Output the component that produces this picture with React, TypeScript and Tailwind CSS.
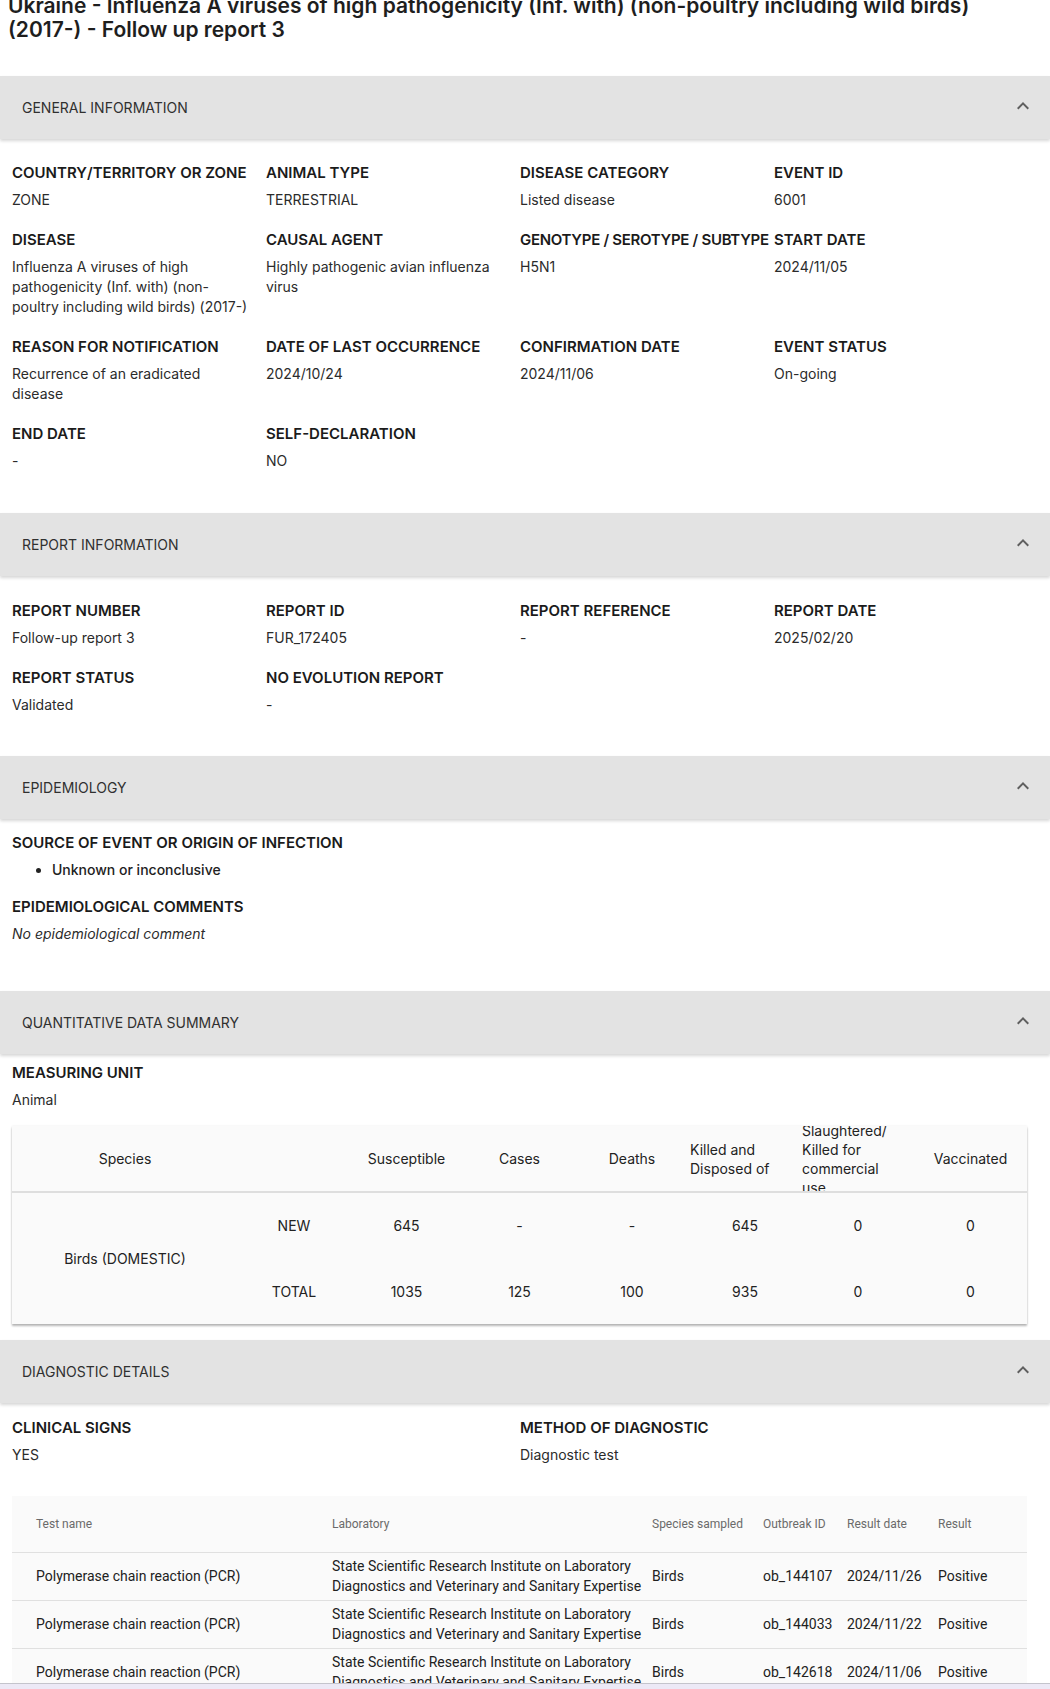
import React from "react";

type Field = { label: string; value: React.ReactNode; tight?: boolean };

const generalFields: Field[] = [
  { label: "Country/Territory or zone", value: "ZONE" },
  { label: "Animal type", value: "TERRESTRIAL" },
  { label: "Disease category", value: "Listed disease" },
  { label: "Event ID", value: "6001" },
  {
    label: "Disease",
    value: (
      <>
        Influenza A viruses of high
        <br />
        pathogenicity (Inf. with) (non-
        <br />
        poultry including wild birds) (2017-)
      </>
    ),
  },
  {
    label: "Causal agent",
    value: (
      <>
        Highly pathogenic avian influenza
        <br />
        virus
      </>
    ),
  },
  // this label runs right up to the next column in the original
  { label: "Genotype / Serotype / Subtype", value: "H5N1", tight: true },
  { label: "Start date", value: "2024/11/05" },
  {
    label: "Reason for notification",
    value: (
      <>
        Recurrence of an eradicated
        <br />
        disease
      </>
    ),
  },
  { label: "Date of last occurrence", value: "2024/10/24" },
  { label: "Confirmation date", value: "2024/11/06" },
  { label: "Event status", value: "On-going" },
  { label: "End date", value: "-" },
  { label: "Self-declaration", value: "NO" },
];

const reportFields: Field[] = [
  { label: "Report number", value: "Follow-up report 3" },
  { label: "Report ID", value: "FUR_172405" },
  { label: "Report reference", value: "-" },
  { label: "Report date", value: "2025/02/20" },
  { label: "Report status", value: "Validated" },
  { label: "No evolution report", value: "-" },
];

const tests = [
  { outbreak: "ob_144107", date: "2024/11/26" },
  { outbreak: "ob_144033", date: "2024/11/22" },
  { outbreak: "ob_142618", date: "2024/11/06" },
];

function ExpandLess() {
  return (
    <svg viewBox="0 0 24 24" className="mb-[3px] h-6 w-6 fill-[#5f5f5f]">
      <path d="M12 8l-6 6 1.41 1.41L12 10.83l4.59 4.58L18 14z" />
    </svg>
  );
}

function SectionHeader({ title }: { title: string }) {
  return (
    <div className="relative z-10 flex h-[63px] items-center justify-between bg-[#e3e3e3] pl-[22px] pr-[15px] shadow-[0_2px_3px_rgba(0,0,0,0.16)]">
      <span className="text-[14px] uppercase text-[#303030]">{title}</span>
      <ExpandLess />
    </div>
  );
}

function FieldBlock({
  label,
  tight,
  children,
}: {
  label: string;
  tight?: boolean;
  children: React.ReactNode;
}) {
  return (
    <div className="pb-5">
      <div
        className={
          tight
            ? "whitespace-nowrap text-[15px] font-semibold uppercase leading-5 tracking-[-0.3px] text-[#1b1b1b]"
            : "whitespace-nowrap text-[15px] font-semibold uppercase leading-5 text-[#1b1b1b]"
        }
      >
        {label}
      </div>
      <div className="mt-[7px] whitespace-nowrap text-[14px] leading-5 text-[#2b2b2b]">{children}</div>
    </div>
  );
}

function QuantHead({ children, wrap }: { children: React.ReactNode; wrap?: boolean }) {
  return (
    <th className="h-[65px] p-0 font-normal">
      <div
        className={
          wrap
            ? "flex h-[65px] items-center overflow-hidden text-left leading-[19px]"
            : "flex h-[65px] items-center justify-center overflow-hidden"
        }
      >
        <span>{children}</span>
      </div>
    </th>
  );
}

export default function App() {
  return (
    <div className="min-h-screen bg-white font-[family-name:Inter,'Noto_Sans',sans-serif] text-[#222]">
      <h1 className="mt-[-6px] mb-[34px] px-2 text-[21px] font-semibold leading-6 text-[#1e1e1e]">
        Ukraine - Influenza A viruses of high pathogenicity (Inf. with) (non-poultry including wild birds)
        <br />
        (2017-) - Follow up report 3
      </h1>

      <SectionHeader title="General information" />
      <div className="grid grid-cols-[254px_254px_254px_254px] px-3 pt-6 pb-[22px]">
        {generalFields.map((f) => (
          <FieldBlock key={f.label} label={f.label} tight={f.tight}>
            {f.value}
          </FieldBlock>
        ))}
      </div>

      <SectionHeader title="Report information" />
      <div className="grid grid-cols-[254px_254px_254px_254px] px-3 pt-[25px] pb-[21px]">
        {reportFields.map((f) => (
          <FieldBlock key={f.label} label={f.label}>
            {f.value}
          </FieldBlock>
        ))}
      </div>

      <SectionHeader title="Epidemiology" />
      <div className="px-3 pt-[14px] pb-[47px]">
        <div className="text-[15px] font-semibold uppercase leading-5 text-[#1b1b1b]">
          Source of event or origin of infection
        </div>
        <ul className="mt-[7px] list-disc pl-[40px] text-[14px] font-medium leading-5 text-[#222]">
          <li>Unknown or inconclusive</li>
        </ul>
        <div className="mt-[17px] text-[15px] font-semibold uppercase leading-5 text-[#1b1b1b]">
          Epidemiological comments
        </div>
        <div className="mt-[7px] text-[14px] italic leading-5 text-[#2b2b2b]">No epidemiological comment</div>
      </div>

      <SectionHeader title="Quantitative data summary" />
      <div className="px-3 pt-[9px] pb-4">
        <div className="text-[15px] font-semibold uppercase leading-5 text-[#1b1b1b]">Measuring unit</div>
        <div className="mt-[7px] text-[14px] leading-5 text-[#2b2b2b]">Animal</div>
        <div className="mt-4 w-[1015px] bg-[#fafafa] shadow-[0_2px_2px_rgba(0,0,0,0.28),0_0_2px_rgba(0,0,0,0.08)]">
          <table className="w-full table-fixed border-collapse text-[14px] text-[#222]">
            <colgroup>
              <col className="w-[226px]" />
              <col className="w-[112px]" />
              <col className="w-[113px]" />
              <col className="w-[113px]" />
              <col className="w-[112px]" />
              <col className="w-[114px]" />
              <col className="w-[112px]" />
              <col className="w-[113px]" />
            </colgroup>
            <thead>
              <tr className="border-b-2 border-[#dedede]">
                <QuantHead>Species</QuantHead>
                <QuantHead>{""}</QuantHead>
                <QuantHead>Susceptible</QuantHead>
                <QuantHead>Cases</QuantHead>
                <QuantHead>Deaths</QuantHead>
                <QuantHead wrap>
                  <span className="block pl-[2px]">
                    Killed and
                    <br />
                    Disposed of
                  </span>
                </QuantHead>
                <QuantHead wrap>
                  <span className="block">
                    Slaughtered/
                    <br />
                    Killed for
                    <br />
                    commercial
                    <br />
                    use
                  </span>
                </QuantHead>
                <QuantHead>Vaccinated</QuantHead>
              </tr>
            </thead>
            <tbody className="text-center">
              <tr className="h-[66px]">
                <td rowSpan={2}>Birds (DOMESTIC)</td>
                <td>NEW</td>
                <td>645</td>
                <td>-</td>
                <td>-</td>
                <td>645</td>
                <td>0</td>
                <td>0</td>
              </tr>
              <tr className="h-[66px]">
                <td>TOTAL</td>
                <td>1035</td>
                <td>125</td>
                <td>100</td>
                <td>935</td>
                <td>0</td>
                <td>0</td>
              </tr>
            </tbody>
          </table>
        </div>
      </div>

      <SectionHeader title="Diagnostic details" />
      <div className="px-3 pt-[15px]">
        <div className="grid grid-cols-[508px_508px]">
          <div>
            <div className="text-[15px] font-semibold uppercase leading-5 text-[#1b1b1b]">Clinical signs</div>
            <div className="mt-[7px] text-[14px] leading-5 text-[#2b2b2b]">YES</div>
          </div>
          <div>
            <div className="text-[15px] font-semibold uppercase leading-5 text-[#1b1b1b]">Method of diagnostic</div>
            <div className="mt-[7px] text-[14px] leading-5 text-[#2b2b2b]">Diagnostic test</div>
          </div>
        </div>
        <table className="mt-[31px] w-[1015px] table-fixed border-collapse bg-[#fafafa] text-left font-[family-name:Roboto,sans-serif]">
          <colgroup>
            <col className="w-[320px]" />
            <col className="w-[320px]" />
            <col className="w-[111px]" />
            <col className="w-[84px]" />
            <col className="w-[91px]" />
            <col className="w-[89px]" />
          </colgroup>
          <thead>
            <tr className="h-[56px] text-[12px] text-[#6a6a6a]">
              <th className="pl-6 font-normal">Test name</th>
              <th className="font-normal">Laboratory</th>
              <th className="font-normal">Species sampled</th>
              <th className="font-normal">Outbreak ID</th>
              <th className="font-normal">Result date</th>
              <th className="font-normal">Result</th>
            </tr>
          </thead>
          <tbody className="text-[14px] text-[#212121]">
            {tests.map((t) => (
              <tr key={t.outbreak} className="h-[48px] border-t border-[#e0e0e0]">
                <td className="pl-6">Polymerase chain reaction (PCR)</td>
                <td className="whitespace-nowrap leading-5">
                  State Scientific Research Institute on Laboratory
                  <br />
                  Diagnostics and Veterinary and Sanitary Expertise
                </td>
                <td>Birds</td>
                <td>{t.outbreak}</td>
                <td>{t.date}</td>
                <td>Positive</td>
              </tr>
            ))}
          </tbody>
        </table>
      </div>

      <div className="fixed inset-x-0 bottom-0 h-[6px] border-t border-[#c4c4cc] bg-[#ece9f6]" />
    </div>
  );
}
